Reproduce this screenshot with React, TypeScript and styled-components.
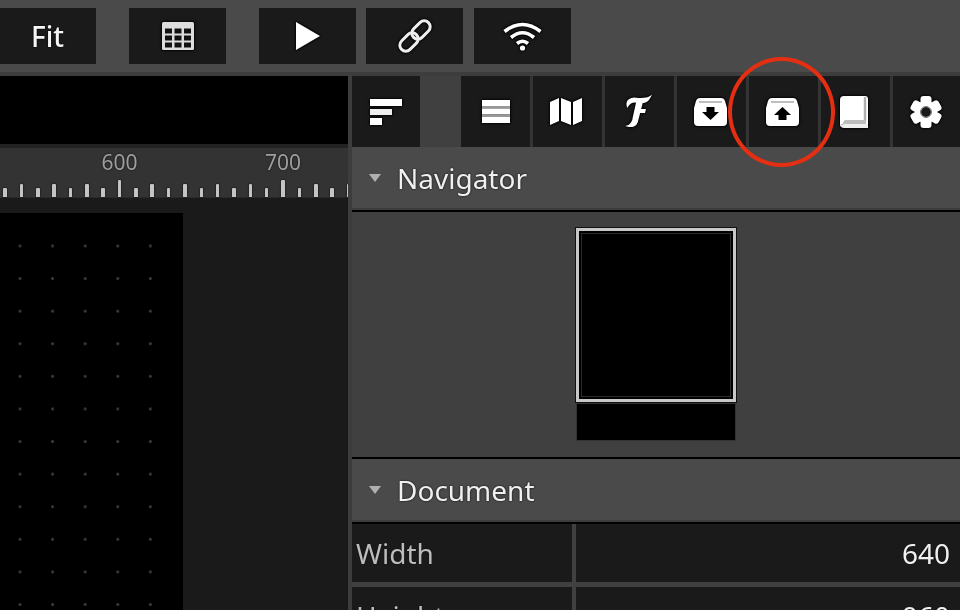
import React from 'react'
import styled, { createGlobalStyle } from 'styled-components'

const GlobalStyle = createGlobalStyle`
  html,
  body {
    margin: 0;
    padding: 0;
    height: 100%;
    overflow: hidden;
    background: #4a4a4a;
    font-family: 'Noto Sans', 'Open Sans', sans-serif;
  }
`

const Page = styled.div`
  position: relative;
  width: 960px;
  height: 610px;
  overflow: hidden;
  display: flex;
  flex-direction: column;
  filter: blur(0.45px);
`

const TopBar = styled.div`
  flex: 0 0 76px;
  box-sizing: border-box;
  display: flex;
  align-items: flex-start;
  padding-top: 8px;
  margin-left: -1px;
  background: #4a4a4a;
  border-bottom: 4px solid #3d3d3d;
`

const TopButton = styled.div<{ $gap?: number }>`
  flex: 0 0 97px;
  height: 56px;
  margin-right: ${({ $gap }) => $gap ?? 10}px;
  display: flex;
  align-items: center;
  justify-content: center;
  background: #1a1a1a;
  color: #f6f6f6;
  font-size: 28px;
  font-weight: 500;
  text-shadow: 0 0 2px #000;
  svg {
    overflow: visible;
    filter: drop-shadow(0 0 1px #000) drop-shadow(0 0 1px #000);
  }
`

const Main = styled.div`
  flex: 1;
  min-height: 0;
  display: flex;
`

const Workspace = styled.div`
  flex: 0 0 348px;
  display: flex;
  flex-direction: column;
  overflow: hidden;
  border-right: 4px solid #3d3d3d;
  background: #1a1a1a;
`

const CanvasHeader = styled.div`
  flex: 0 0 68px;
  background: #000;
  border-bottom: 4px solid #222;
`

const Ruler = styled.div`
  flex: 0 0 50px;
  box-sizing: border-box;
  display: flex;
  align-items: flex-end;
  margin-left: -3px;
  background: #333;
  border-bottom: 1px solid #2a2a2a;
`

const TickCell = styled.div`
  position: relative;
  flex: 0 0 16.35px;
  display: flex;
  justify-content: center;
`

const TickMark = styled.div<{ $height: number }>`
  width: 3.6px;
  height: ${({ $height }) => $height}px;
  background: #c4c4c4;
  box-shadow: 0 0 2px #000;
  border-radius: 1px 1px 0 0;
`

const TickLabel = styled.span`
  position: absolute;
  left: 50%;
  bottom: 23px;
  transform: translateX(-50%);
  color: #9e9e9e;
  font-size: 21px;
  line-height: 24px;
  text-shadow: 0 0 2px #111;
`

const CanvasArea = styled.div`
  flex: 1;
  min-height: 0;
  padding: 15px 165px 0 0;
`

const Artboard = styled.div`
  box-sizing: border-box;
  height: 100%;
  padding: 15px 15px 0 0;
  background-image: radial-gradient(circle, #3c3c3c 1.1px, transparent 1.7px), linear-gradient(#000, #000);
  background-size: 32.6px 32.6px, 100% 100%;
  background-position: 3.7px 16.7px, 0 0;
  background-clip: content-box, border-box;
`

const SidePanel = styled.div`
  flex: 1;
  min-width: 0;
  display: flex;
  flex-direction: column;
  background: #404040;
`

const ToolBar = styled.div`
  flex: 0 0 71px;
  display: flex;
  background: #1a1a1a;
`

const ToolCell = styled.div<{ $width: number; $split?: boolean; $active?: boolean }>`
  flex: 0 0 ${({ $width }) => $width}px;
  box-sizing: border-box;
  display: flex;
  align-items: center;
  justify-content: center;
  background: ${({ $active }) => ($active ? '#404040' : 'transparent')};
  border-left: ${({ $split }) => ($split ? '3px solid #343434' : 'none')};
  padding-right: ${({ $split }) => ($split ? 3 : 0)}px;
  svg {
    overflow: visible;
    filter: drop-shadow(0 0 1px #000) drop-shadow(0 0 1px #000);
  }
`

const SectionHeader = styled.div`
  flex: 0 0 61px;
  display: flex;
  align-items: center;
  margin-bottom: 2px;
  padding-left: 17px;
  background: #4a4a4a;
  border-bottom: 2px solid #3d3d3d;
  box-shadow: 0 2px 0 #000;
  color: #f0f0f0;
  font-size: 28px;
  text-shadow: 0 0 2px #000;
`

const Caret = styled.span`
  width: 0;
  height: 0;
  margin-right: 16px;
  border-left: 6px solid transparent;
  border-right: 6px solid transparent;
  border-top: 8px solid #b0b0b0;
`

const NavigatorBody = styled.div`
  flex: 0 0 247px;
  display: flex;
  flex-direction: column;
  align-items: center;
  padding-top: 16px;
  box-sizing: border-box;
  border-bottom: 2px solid #000;
`

const Thumbnail = styled.div`
  box-sizing: border-box;
  width: 160px;
  flex: 0 0 174px;
  background: #000;
  border: 3px solid #c8c8c8;
  box-shadow: inset 0 0 0 2px #000, inset 0 0 0 3px #2c2c2c, 0 0 0 1px #111;
`

const ThumbnailRest = styled.div`
  width: 158px;
  flex: 0 0 36px;
  margin-top: 2px;
  background: #000;
  box-shadow: 0 0 0 1px #333;
`

const PropertyRow = styled.div`
  flex: 0 0 58px;
  display: flex;
  gap: 4px;
  background: #404040;
  & + & {
    margin-top: 5px;
  }
`

const PropertyLabel = styled.div`
  flex: 0 0 220px;
  box-sizing: border-box;
  display: flex;
  align-items: center;
  padding-left: 4px;
  background: #1a1a1a;
  color: #bdbdbd;
  font-size: 28px;
  text-shadow: 0 0 1px #000;
`

const PropertyValue = styled.div`
  flex: 1;
  box-sizing: border-box;
  display: flex;
  align-items: center;
  justify-content: flex-end;
  padding-right: 10px;
  background: #1a1a1a;
  color: #f0f0f0;
  font-size: 28px;
  text-shadow: 0 0 1px #000;
`

const Annotation = styled.div`
  position: absolute;
  z-index: 2;
  left: 728px;
  top: 57px;
  width: 107px;
  height: 110px;
  box-sizing: border-box;
  border: 4px solid #e52f12;
  border-radius: 50%;
`

const GridIcon = () => (
  <svg width="32" height="28" viewBox="0 0 32 28">
    <rect width="32" height="28" rx="1.5" fill="#dcdcdc" />
    {[0, 1, 2].map(row =>
      [0, 1, 2].map(col => (
        <rect key={`${row}-${col}`} x={3 + col * 9.5} y={6.5 + row * 7} width="7" height="5" fill="#111" />
      ))
    )}
  </svg>
)

const PlayIcon = () => (
  <svg width="26" height="30" viewBox="0 0 26 30">
    <path d="M1 1 L25 15 L1 29 Z" fill="#fff" />
  </svg>
)

const LinkIcon = () => (
  <svg width="32" height="32" viewBox="0 0 32 32">
    <g transform="rotate(-45 16 16)" fill="none" stroke="#eee" strokeWidth="3">
      <rect x="-3" y="10" width="21" height="12" rx="6" />
      <rect x="14" y="10" width="21" height="12" rx="6" />
    </g>
  </svg>
)

const WifiIcon = () => (
  <svg width="39" height="29" viewBox="0 0 39 29">
    <g fill="none" stroke="#fff" strokeWidth="3.6">
      <path d="M1.5 9.5 Q19.5 -4.5 37.5 9.5" />
      <path d="M8 15.5 Q19.5 6 31 15.5" />
      <path d="M14 21.5 Q19.5 17 25 21.5" />
    </g>
    <circle cx="19.5" cy="26" r="2.6" fill="#fff" />
  </svg>
)

const SortIcon = () => (
  <svg width="32" height="26" viewBox="0 0 32 26">
    <rect y="0" width="32" height="7" fill="#fff" />
    <rect y="10" width="22" height="6" fill="#eee" />
    <rect y="19" width="12" height="7" fill="#fff" />
  </svg>
)

const ListIcon = () => (
  <svg width="28" height="23" viewBox="0 0 28 23">
    <rect width="28" height="6" fill="#fff" />
    <rect y="6" width="28" height="2.5" fill="#999" />
    <rect y="8.5" width="28" height="6" fill="#fff" />
    <rect y="14.5" width="28" height="2.5" fill="#999" />
    <rect y="17" width="28" height="6" fill="#fff" />
  </svg>
)

const MapIcon = () => (
  <svg width="32" height="29" viewBox="0 0 32 29">
    <path d="M0 5 L9 1 V24 L0 28 Z" fill="#fff" />
    <path d="M11 1 L21 5 V28 L11 24 Z" fill="#fff" />
    <path d="M23 5 L32 1 V24 L23 28 Z" fill="#fff" />
  </svg>
)

const FontIcon = () => (
  <svg width="24" height="32" viewBox="0 0 24 32">
    <path
      d="M1.5 10 C0 4 5 2 10 2.5 C15 3 20 3.5 24 1 C22 5 19 6.5 16 6.5 L11 26 C10 29.5 6 31 2 30 C5 29 6 27 7 24 L11 6 C7 5 4 6 1.5 10 Z"
      fill="#fff"
      stroke="#fff"
      strokeWidth="1.6"
    />
    <path d="M11 13 H20 L19 17 H10 Z" fill="#fff" />
  </svg>
)

const BoxIcon = ({ up }: { up?: boolean }) => (
  <svg width="33" height="28" viewBox="0 0 33 28">
    <path d="M6 0 H27 Q30 0 31 3 L33 10 V24 Q33 28 29 28 H4 Q0 28 0 24 V10 L2 3 Q3 0 6 0 Z" fill="#fff" />
    <path d="M5 4 H28" stroke="#a8a8a8" strokeWidth="1.5" />
    {up ? (
      <path d="M16.5 9 L25 17 H20.5 V22 H12.5 V17 H8 Z" fill="#000" />
    ) : (
      <path d="M12.5 9 H20.5 V14 H25 L16.5 22 L8 14 H12.5 Z" fill="#000" />
    )}
  </svg>
)

const BookIcon = () => (
  <svg width="28" height="32" viewBox="0 0 28 32">
    <path d="M4 0 H25 Q28 0 28 3 V28 H4 Q0 28 0 31 V4 Q0 0 4 0 Z" fill="#fff" />
    <path d="M25 1 V26" stroke="#b0b0b0" strokeWidth="2.5" />
    <path d="M3 28 Q3 24 6 24 H26 V28 Z" fill="#bcbcbc" />
    <path d="M0 29 Q1 32 4 32 H28 V28 H4 Z" fill="#eee" />
  </svg>
)

const GearIcon = () => (
  <svg width="30" height="32" viewBox="-15 -16 30 32">
    {[0, 60, 120].map(angle => (
      <rect key={angle} x="-5.5" y="-16" width="11" height="32" rx="3" fill="#fff" transform={`rotate(${angle})`} />
    ))}
    <circle r="11" fill="#fff" />
    <circle r="5" fill="#1a1a1a" />
    <circle r="5.5" fill="none" stroke="#777" strokeWidth="1" />
  </svg>
)

const tickHeight = (i: number) => (i % 10 === 7 ? 17 : i % 2 === 1 ? 13 : 9)

const ticks = Array.from({ length: 22 }, (_, i) => i)

export default function App() {
  return (
    <Page>
      <GlobalStyle />
      <TopBar>
        <TopButton $gap={33}>Fit</TopButton>
        <TopButton $gap={33}>
          <GridIcon />
        </TopButton>
        <TopButton>
          <PlayIcon />
        </TopButton>
        <TopButton $gap={11}>
          <LinkIcon />
        </TopButton>
        <TopButton>
          <WifiIcon />
        </TopButton>
      </TopBar>
      <Main>
        <Workspace>
          <CanvasHeader />
          <Ruler>
            {ticks.map(i => (
              <TickCell key={i}>
                {i === 7 && <TickLabel>600</TickLabel>}
                {i === 17 && <TickLabel>700</TickLabel>}
                <TickMark $height={tickHeight(i)} />
              </TickCell>
            ))}
          </Ruler>
          <CanvasArea>
            <Artboard />
          </CanvasArea>
        </Workspace>
        <SidePanel>
          <ToolBar>
            <ToolCell $width={68}>
              <SortIcon />
            </ToolCell>
            <ToolCell $width={41} $active />
            <ToolCell $width={69}>
              <ListIcon />
            </ToolCell>
            <ToolCell $width={72} $split>
              <MapIcon />
            </ToolCell>
            <ToolCell $width={72} $split>
              <FontIcon />
            </ToolCell>
            <ToolCell $width={72} $split>
              <BoxIcon />
            </ToolCell>
            <ToolCell $width={72} $split>
              <BoxIcon up />
            </ToolCell>
            <ToolCell $width={72} $split>
              <BookIcon />
            </ToolCell>
            <ToolCell $width={72} $split>
              <GearIcon />
            </ToolCell>
          </ToolBar>
          <SectionHeader>
            <Caret />
            Navigator
          </SectionHeader>
          <NavigatorBody>
            <Thumbnail />
            <ThumbnailRest />
          </NavigatorBody>
          <SectionHeader>
            <Caret />
            Document
          </SectionHeader>
          <PropertyRow>
            <PropertyLabel>Width</PropertyLabel>
            <PropertyValue>640</PropertyValue>
          </PropertyRow>
          <PropertyRow>
            <PropertyLabel>Height</PropertyLabel>
            <PropertyValue>960</PropertyValue>
          </PropertyRow>
        </SidePanel>
      </Main>
      <Annotation />
    </Page>
  )
}
